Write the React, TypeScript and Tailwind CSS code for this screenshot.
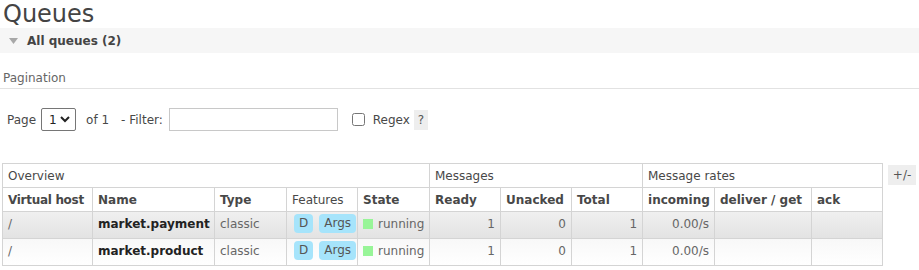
import { Fragment } from 'react';

const queues = [
  { vhost: '/', name: 'market.payment', type: 'classic', ready: 1, unacked: 0, total: 1, incoming: '0.00/s' },
  { vhost: '/', name: 'market.product', type: 'classic', ready: 1, unacked: 0, total: 1, incoming: '0.00/s' },
];

const colWidths = [90, 122, 72, 71, 72, 71, 71, 71, 72, 97, 71];

const cell = 'border border-[#d4d4d4] px-[5px] align-top whitespace-nowrap overflow-hidden';
const head = 'border border-[#d4d4d4] px-[5px] text-left align-middle whitespace-nowrap overflow-hidden';

export default function App() {
  return (
    <div className="w-[919px] h-[270px] overflow-hidden bg-white font-['DejaVu_Sans',Verdana,sans-serif] text-[#484848]">
      {/* Title */}
      <h1 className="h-[28px] pl-[3px] text-[24px] leading-[28px] text-[#444]">Queues</h1>

      {/* Section bar */}
      <div className="flex h-[25px] items-center bg-[#f6f6f6] pl-[9px]">
        <svg width="9" height="6" viewBox="0 0 9 6" className="mt-[1px]">
          <polygon points="0,0 9,0 4.5,6" fill="#a8a8a8" />
        </svg>
        <span className="ml-[9px] text-[12px] font-bold text-[#444]">All queues (2)</span>
      </div>

      {/* Pagination */}
      <div className="mt-[18px] border-b border-[#e2e2e2] pb-[2px] pl-[3px] text-[12px] leading-[15px] text-[#666]">
        Pagination
      </div>

      <div className="mt-[19px] flex h-[23px] items-center pl-[7px] text-[12px] whitespace-nowrap">
        <span>Page</span>
        <div className="relative ml-[5px] h-[23px] w-[35px]">
          <select className="h-full w-full appearance-none rounded-[2px] border border-[#767676] bg-white pl-[7px] text-[12px] text-[#222] outline-none">
            <option>1</option>
          </select>
          <svg width="10" height="7" viewBox="0 0 10 7" className="pointer-events-none absolute right-[6px] top-[8px]">
            <polyline points="1,1 5,5 9,1" fill="none" stroke="#222" strokeWidth="2" />
          </svg>
        </div>
        <span className="ml-[10px]">of 1</span>
        <span className="ml-[12px]">- Filter:</span>
        <input
          type="text"
          className="ml-[6px] h-[23px] w-[169px] border border-[#c8c8c8] bg-white outline-none"
        />
        <input type="checkbox" className="ml-[14px] h-[13px] w-[13px]" />
        <span className="ml-[8px]">Regex</span>
        <span className="ml-[4px] flex h-[20px] w-[14px] items-center justify-center bg-[#eee] text-[12px] text-[#555]">?</span>
      </div>

      {/* Table */}
      <div className="mt-[32px] flex items-start pl-[2px]">
        <table className="table-fixed border-collapse text-[12px]" style={{ width: 881 }}>
          <colgroup>
            {colWidths.map((w, i) => (
              <col key={i} style={{ width: w }} />
            ))}
          </colgroup>
          <thead>
            <tr className="h-[24px]">
              <th colSpan={5} className={`${head} font-normal`}>Overview</th>
              <th colSpan={3} className={`${head} font-normal`}>Messages</th>
              <th colSpan={3} className={`${head} font-normal`}>Message rates</th>
            </tr>
            <tr className="h-[24px]">
              <th className={`${head} font-bold tracking-[-0.3px]`}>Virtual host</th>
              <th className={`${head} font-bold`}>Name</th>
              <th className={`${head} font-bold`}>Type</th>
              <th className={`${head} font-normal`}>Features</th>
              <th className={`${head} font-bold`}>State</th>
              <th className={`${head} font-bold`}>Ready</th>
              <th className={`${head} font-bold`}>Unacked</th>
              <th className={`${head} font-bold`}>Total</th>
              <th className={`${head} font-bold`}>incoming</th>
              <th className={`${head} font-bold`}>deliver / get</th>
              <th className={`${head} font-bold`}>ack</th>
            </tr>
          </thead>
          <tbody>
            {queues.map((q, i) => (
              <Fragment key={q.name}>
                <tr
                  className={`h-[27px] ${
                    i === 0
                      ? 'bg-gradient-to-b from-[#f0f0f0] to-[#e2e2e2]'
                      : 'bg-gradient-to-b from-[#f8f8f8] to-[#ffffff]'
                  }`}
                >
                  <td className={`${cell} pt-[3px] text-[#666]`}>{q.vhost}</td>
                  <td className={`${cell} pt-[3px] font-bold text-[#222]`}>{q.name}</td>
                  <td className={`${cell} pt-[3px] text-[#666]`}>{q.type}</td>
                  <td className={`${cell} pt-[2px] pb-[2px]`}>
                    <div className="flex items-center gap-[6px] pl-[2px]">
                      <span className="rounded-[4px] bg-[#a6e4fb] px-[5px] py-[2px] leading-[15px] text-[#555]">D</span>
                      <span className="rounded-[4px] bg-[#a6e4fb] px-[5px] py-[2px] leading-[15px] text-[#555]">Args</span>
                    </div>
                  </td>
                  <td className={`${cell} pt-[3px] text-[#666]`}>
                    <span className="mr-[5px] inline-block h-[10px] w-[10px] bg-[#98f598] align-[-1px]" />
                    running
                  </td>
                  <td className={`${cell} pt-[3px] text-right text-[#666]`}>{q.ready}</td>
                  <td className={`${cell} pt-[3px] text-right text-[#666]`}>{q.unacked}</td>
                  <td className={`${cell} pt-[3px] text-right text-[#666]`}>{q.total}</td>
                  <td className={`${cell} pt-[3px] text-right text-[#666]`}>{q.incoming}</td>
                  <td className={cell}></td>
                  <td className={cell}></td>
                </tr>
              </Fragment>
            ))}
          </tbody>
        </table>
        <div className="ml-[5px] mt-[2px] flex h-[20px] w-[28px] items-center justify-center bg-[#eee] text-[12px] text-[#555]">
          +/-
        </div>
      </div>
    </div>
  );
}
